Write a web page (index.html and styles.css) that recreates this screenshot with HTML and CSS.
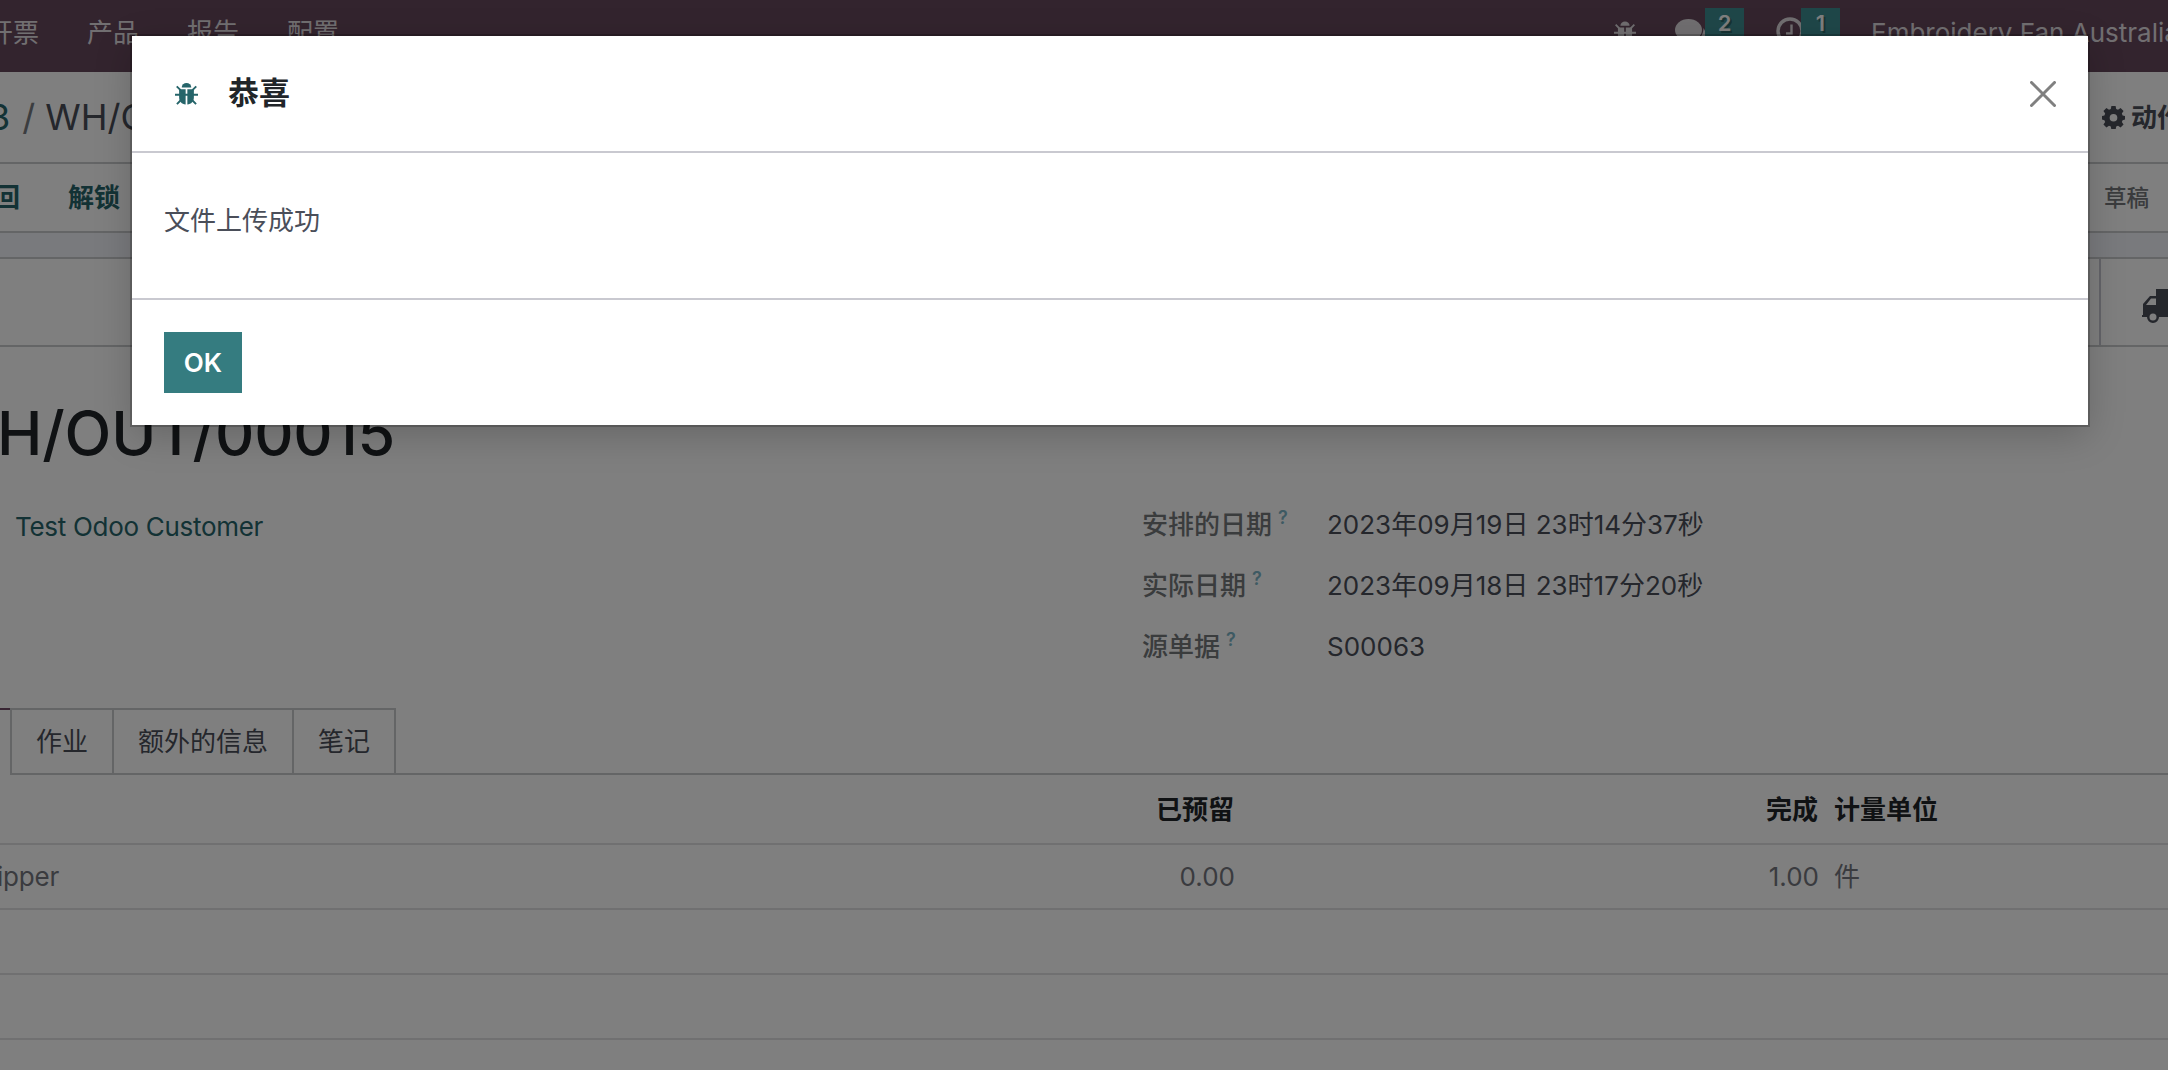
FILE: index.html
```
<!DOCTYPE html>
<html lang="zh-CN">
<head>
  <meta charset="UTF-8">
  <meta name="viewport" content="width=device-width, initial-scale=1.0">
  <title>WH/OUT/00015</title>
  <link rel="stylesheet" href="styles.css">
</head>
<body>
  <!-- Shared icons -->
  <svg class="sprite" aria-hidden="true">
    <symbol id="bug" viewBox="0 0 24 24">
      <path d="M7 5.2a5 4.600 0 0 1 10 0z"/>
      <path d="M4.300 7h6.800v16C7 22.600 4.300 20 4.300 15.500zM12.900 7h6.800v8.500c0 4.500-2.700 7.100-6.800 7.500z"/>
      <path d="M0 12.800h24M1.800 4l4 4M22.200 4l-4 4M2 22.500l4.500-4.500M22 22.500l-4.500-4.500" fill="none" stroke="currentColor" stroke-width="2"/>
    </symbol>
  </svg>

  <nav class="navbar">
    <a href="#">开票</a>
    <a href="#">产品</a>
    <a href="#">报告</a>
    <a href="#">配置</a>
    <div class="systray">
      <svg class="tray-bug"><use href="#bug"/></svg>
      <div class="tray-item tray-chat">
        <svg viewBox="0 0 32 28"><ellipse cx="13.500" cy="11" rx="13.500" ry="11"/><path d="M28.500 9c4 6 2 12-3 13.500l3 4c-5 0-8-1-10-3 6-2 10-8 10-14.500z"/></svg>
        <span class="badge">2</span>
      </div>
      <div class="tray-item tray-clock">
        <svg viewBox="0 0 28 28"><circle cx="14" cy="14" r="12" fill="none" stroke="currentColor" stroke-width="3.400"/><path d="M15.500 7.500v9H10" fill="none" stroke="currentColor" stroke-width="2.400"/></svg>
        <span class="badge">1</span>
      </div>
      <span class="company">Embroidery Fan Australia</span>
    </div>
  </nav>

  <div class="control-panel">
    <div class="breadcrumb"><a href="#">3</a><span class="slash">/</span><span>WH/OUT/00015</span></div>
    <button class="action">
      <svg viewBox="0 0 24 24"><path fill-rule="evenodd" d="M9.800 0h4.400l.6 3.200 1.900.8 2.700-1.900 3.100 3.100-1.800 2.700.8 1.900 2.500.6v3.800l-2.500.6-.8 1.900 1.800 2.700-3.100 3.100-2.700-1.800-1.900.8-.6 3.200H9.800l-.6-3.200-1.900-.8-2.700 1.800-3.100-3.100 1.800-2.700-.8-1.900-2.500-.6v-3.800l2.500-.6.8-1.900-1.800-2.700 3.100-3.100 2.700 1.900 1.900-.8zM12 8.300a4 4 0 1 0 0 8 4 4 0 0 0 0-8z"/></svg>
      动作
    </button>
  </div>

  <div class="statusbar">
    <button>返回</button>
    <button>解锁</button>
    <span class="state">草稿</span>
  </div>

  <main class="sheet">
    <div class="button-box">
      <div class="stat-button">
        <svg viewBox="0 0 48 36"><path fill-rule="evenodd" d="M14 0h34v28h-9a6 6 0 0 1-12 0H17a6 6 0 0 1-12 0H0v-2h1V15L8 7h6zM4 16h10v-6.500H9zM11 24.500a3.500 3.500 0 1 0 0 7 3.500 3.500 0 0 0 0-7z"/></svg>
      </div>
    </div>

    <h1>H/OUT/00015</h1>

    <div class="fields">
      <a class="partner" href="#">Test Odoo Customer</a>
      <dl>
        <dt>安排的日期<sup>?</sup></dt><dd>2023年09月19日 23时14分37秒</dd>
        <dt>实际日期<sup>?</sup></dt><dd>2023年09月18日 23时17分20秒</dd>
        <dt>源单据<sup>?</sup></dt><dd>S00063</dd>
      </dl>
    </div>

    <div class="tabs">
      <span class="tab-active"></span>
      <a href="#">作业</a>
      <a href="#">额外的信息</a>
      <a href="#">笔记</a>
      <span class="tab-rest"></span>
    </div>

    <table class="lines">
      <thead>
        <tr><th class="product"></th><th class="num reserved">已预留</th><th class="num done">完成</th><th>计量单位</th></tr>
      </thead>
      <tbody>
        <tr><td class="product"><span>ipper</span></td><td class="num">0.00</td><td class="num">1.00</td><td>件</td></tr>
        <tr><td colspan="4"></td></tr>
        <tr><td colspan="4"></td></tr>
        <tr><td colspan="4"></td></tr>
      </tbody>
    </table>
  </main>

  <div class="backdrop">
    <div class="modal" role="dialog">
      <header class="modal-header">
        <svg class="modal-bug"><use href="#bug"/></svg>
        <h4>恭喜</h4>
        <button class="close" aria-label="Close">
          <svg viewBox="0 0 26 26"><path d="M1.500 1.500l23 23M24.500 1.500l-23 23"/></svg>
        </button>
      </header>
      <div class="modal-body">文件上传成功</div>
      <footer class="modal-footer"><button class="btn-primary">OK</button></footer>
    </div>
  </div>
</body>
</html>
```
FILE: styles.css
```
:root {
  --navbar:#66495d;
  --primary:#357c80;
  --link:#26656a;
  --text:#4a4e59;
  --heading:#212529;
  --border:#c9c9d0;
  --line:#c9cacc;
}
*{box-sizing:border-box;margin:0;padding:0}
body{
  height:1070px;overflow:hidden;background:#fff;color:var(--text);
  font-family:Inter,"Noto Sans CJK SC",sans-serif;font-size:26px;line-height:39px;
}
a{color:var(--link);text-decoration:none}
button{border:0;background:none;font:inherit;color:inherit}
svg{display:block;fill:currentColor}
.sprite{position:absolute;width:0;height:0}

/* navbar */
.navbar{display:flex;align-items:center;height:72px;padding-bottom:7px;background:var(--navbar);color:#e3dfe2;white-space:nowrap}
.navbar a{flex:none;width:100px;color:inherit}
.navbar a:first-child{margin-left:-13px}
.systray{display:flex;align-items:flex-start;height:100%;margin-left:1227px}
.tray-bug{width:22px;height:24px;margin-top:20px}
.tray-item{position:relative}
.tray-chat{margin:19px 0 0 39px}
.tray-chat svg{width:32px;height:28px}
.tray-clock{margin:17px 0 0 69px}
.tray-clock svg{width:28px;height:28px}
.badge{position:absolute;left:30px;top:-11px;width:39px;height:32px;background:#3f8e93;color:#fff;font-size:22px;font-weight:600;line-height:31px;text-align:center;text-shadow:2px 2px 0 rgba(0,0,0,.3)}
.tray-clock .badge{left:25px;top:-9px}
.company{margin:13px 0 0 67px}

/* control panel */
.control-panel{display:flex;align-items:center;height:92px;border-bottom:2px solid var(--line)}
.breadcrumb{display:flex;flex:none;width:2102px;margin-left:-12px;font-size:36px}
.slash{margin:0 10px 0 12px;color:#777a80}
.action{display:flex;align-items:center;flex:none;gap:6px;margin-left:12px;font-weight:600;color:var(--text)}
.action svg{width:23px;height:23px}

/* status bar */
.statusbar{display:flex;align-items:center;height:69px;border-bottom:2px solid var(--line)}
.statusbar button{width:100px;color:var(--link);font-weight:600;text-align:left}
.statusbar button:first-child{margin-left:-32px}
.state{margin-left:auto;width:64px;color:#74777a;font-size:22.500px;font-weight:500}

/* form sheet */
.sheet{border-top:24px solid #f3f4fa}
.button-box{display:flex;justify-content:flex-end;height:90px;border:solid var(--line);border-width:2px 0}
.stat-button{width:69px;padding:30px 0 0 41px;border-left:2px solid #c9c9d2;overflow:hidden}
.stat-button svg{width:48px;height:36px}
h1{height:93px;margin:39px 0 0 -3px;color:var(--heading);font-size:61px;font-weight:500;line-height:94px;letter-spacing:-.2px}
.fields{display:flex;height:229px;padding-top:26px}
.partner{width:1127px;margin-left:15px;padding-top:2px;letter-spacing:-.3px}
dl{display:grid;grid-template-columns:185px 1fr;grid-auto-rows:61px}
dt{color:#75787b;font-weight:500}
sup{margin-left:6px;color:#7cb4c6;font-size:18px;font-weight:600;line-height:0}

/* notebook */
.tabs{display:flex;height:67px}
.tabs a{margin-left:-2px;padding:12px 24px 0;border:2px solid var(--line);color:var(--text)}
.tab-active{width:12px;border-top:2px solid #714b67}
.tab-rest{flex:1;border-bottom:2px solid var(--line)}
.lines{width:100%;table-layout:fixed;border-collapse:separate;border-spacing:0}
.lines th,.lines td{height:65px;border-bottom:2px solid #e0e0e2;text-align:left;vertical-align:middle}
.lines th{height:70px;color:var(--heading);font-weight:600}
.lines td{color:#74777e}
.lines .num{padding-right:16px;text-align:right}
.lines td.num{padding-right:15px}
.lines .product{width:650px}
.product span{margin-left:-3px;letter-spacing:-.2px}
.lines .reserved{width:600px}
.lines .done{width:584px}

/* dialog */
.backdrop{position:absolute;inset:0;padding:36px 80px 0 132px;background:rgba(0,0,0,.5)}
.modal{height:389px;background:#fff;box-shadow:0 0 0 2px rgba(0,0,0,.2),0 10px 36px rgba(0,0,0,.2)}
.modal-header{display:flex;align-items:center;height:117px;padding:0 32px 0 43px;border-bottom:2px solid var(--border)}
.modal-bug{width:23px;height:24px;color:var(--link)}
h4{margin:-2px 0 0 30px;color:var(--heading);font-size:31px;font-weight:600}
.close{margin-left:auto}
.close svg{width:26px;height:26px;fill:none;stroke:#808080;stroke-width:3;stroke-linecap:round}
.modal-body{height:147px;padding:48px 32px;border-bottom:2px solid var(--border)}
.modal-footer{padding:32px}
.btn-primary{display:block;width:78px;height:61px;background:var(--primary);color:#fff;font-weight:600}
```
